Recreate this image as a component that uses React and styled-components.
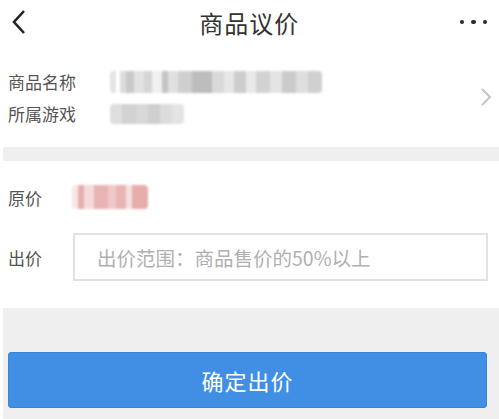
import React from "react";
import styled, { createGlobalStyle } from "styled-components";

const GlobalStyle = createGlobalStyle`
  body {
    margin: 0;
    background: #fff;
    font-family: "Noto Sans CJK SC", "Noto Sans", sans-serif;
  }
`;

const nameBlocks = [
  ["#e4e4e4", 6], ["#fff", 4], ["#dcdcdc", 6], ["#c9c9c9", 8], ["#e2e2e2", 10], ["#d6d6d6", 8],
  ["#f0f0f0", 10], ["#c4c4c4", 6], ["#e0e0e0", 10], ["#cfcfcf", 14], ["#bdbdbd", 20], ["#d9d9d9", 12],
  ["#e6e6e6", 10], ["#cdcdcd", 12], ["#e9e9e9", 10], ["#d2d2d2", 14], ["#e4e4e4", 12], ["#cbcbcb", 14],
  ["#dedede", 12], ["#d0d0d0", 14],
];
const gameBlocks = [
  ["#dedede", 12], ["#d2d2d2", 14], ["#d8d8d8", 12], ["#cfcfcf", 12], ["#dcdcdc", 12], ["#e4e4e4", 12],
];
const priceBlocks = [
  ["#f6e6e6", 6], ["#e7aeae", 6], ["#f4dada", 10], ["#e8b3b3", 14], ["#f0c8c8", 8], ["#e9b4b4", 10],
  ["#f5e0e0", 6], ["#e6adad", 16],
];

function Blur({ blocks, height }) {
  return (
    <Pixels height={height}>
      {blocks.map(([c, w], i) => (
        <Pixel key={i} style={{ background: c, width: w }} />
      ))}
    </Pixels>
  );
}

function App() {
  return (
    <>
      <GlobalStyle />
      <Page>
        <Header>
          <BackIcon width="16" height="26" viewBox="0 0 16 26">
            <path d="M13 2 L3 13 L13 24" fill="none" stroke="#222" strokeWidth="2.6" />
          </BackIcon>
          <Title>商品议价</Title>
          <More>
            <Dot />
            <Dot />
            <Dot />
          </More>
        </Header>

        <Product>
          <ProductInfo>
            <InfoRow>
              <Label>商品名称</Label>
              <Blur blocks={nameBlocks} height={22} />
            </InfoRow>
            <InfoRow>
              <Label>所属游戏</Label>
              <Blur blocks={gameBlocks} height={20} />
            </InfoRow>
          </ProductInfo>
          <svg width="12" height="20" viewBox="0 0 12 20">
            <path d="M2 2 L10 10 L2 18" fill="none" stroke="#c4c4c4" strokeWidth="2" />
          </svg>
        </Product>

        <Band />

        <PriceSection>
          <PriceRow>
            <Label>原价</Label>
            <Blur blocks={priceBlocks} height={24} />
          </PriceRow>
          <OfferRow>
            <Label>出价</Label>
            <OfferInput placeholder="出价范围：商品售价的50%以上" />
          </OfferRow>
        </PriceSection>

        <Footer>
          <SubmitButton>确定出价</SubmitButton>
        </Footer>
      </Page>
    </>
  );
}

const Page = styled.div`
  width: 499px;
  height: 419px;
  display: flex;
  flex-direction: column;
  overflow: hidden;
`;

const Header = styled.div`
  height: 46px;
  display: flex;
  align-items: center;
  justify-content: space-between;
  padding: 0 12px 0 11px;
`;

const BackIcon = styled.svg`
  display: block;
  margin-top: -2px;
`;

const Title = styled.div`
  font-size: 24px;
  color: #333;
  letter-spacing: 1px;
  margin-left: 12px;
  margin-top: -2px;
`;

const More = styled.div`
  display: flex;
  gap: 7px;
  margin-top: -2px;
`;

const Dot = styled.span`
  width: 4.5px;
  height: 4.5px;
  border-radius: 50%;
  background: #2a2a2a;
`;

const Product = styled.div`
  height: 101px;
  display: flex;
  align-items: center;
  padding: 0 7px 0 8px;
`;

const ProductInfo = styled.div`
  flex: 1;
  display: flex;
  flex-direction: column;
  gap: 8px;
  margin-top: 2px;
`;

const InfoRow = styled.div`
  display: flex;
  align-items: center;
  height: 24px;
`;

const Label = styled.div`
  font-size: 17px;
  color: #555;
  width: 102px;
  flex-shrink: 0;
`;

const Pixels = styled.div`
  display: flex;
  height: ${(p) => p.height}px;
  filter: blur(1px);
  border-radius: 4px;
  overflow: hidden;
`;

const Pixel = styled.span`
  height: 100%;
`;

const Band = styled.div`
  height: 14px;
  margin-left: 3px;
  background: #efefef;
`;

const PriceSection = styled.div`
  display: flex;
  flex-direction: column;
  padding: 0 11px 0 8px;
`;

const PriceRow = styled.div`
  height: 72px;
  display: flex;
  align-items: center;
  & > div:first-child {
    width: 64px;
  }
`;

const OfferRow = styled.div`
  display: flex;
  align-items: center;
  height: 48px;
  & > div:first-child {
    width: 65px;
  }
`;

const OfferInput = styled.input`
  flex: 1;
  height: 48px;
  box-sizing: border-box;
  border: 2px solid #e2e2e2;
  padding: 0 0 0 22px;
  font-family: inherit;
  font-size: 19.5px;
  color: #333;
  outline: none;
  &::placeholder {
    color: #b0b0b0;
  }
`;

const Footer = styled.div`
  flex: 1;
  margin-top: 27px;
  margin-left: 3px;
  background: #efefef;
  padding: 44px 12px 0 5px;
`;

const SubmitButton = styled.button`
  width: 100%;
  height: 56px;
  border: 1px solid #3a84d8;
  border-radius: 3px;
  background: #418fe4;
  color: #fff;
  font-family: inherit;
  font-size: 22px;
  letter-spacing: 1px;
  cursor: pointer;
`;

export default App;
